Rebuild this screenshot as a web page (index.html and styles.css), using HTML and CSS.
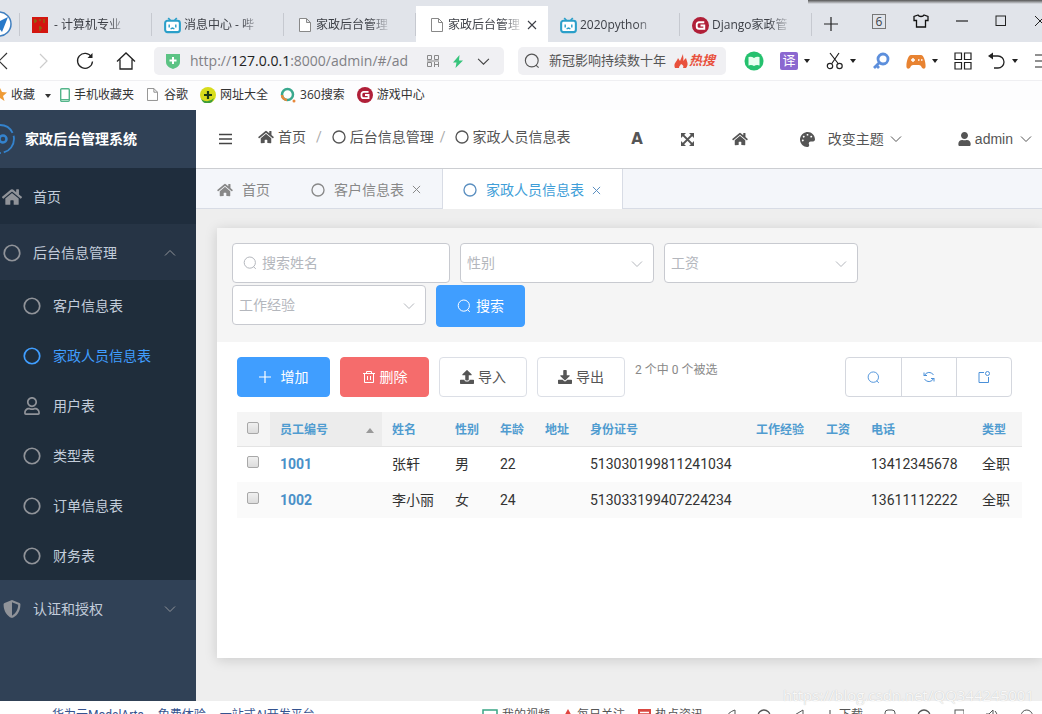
FILE: index.html
```html
<!DOCTYPE html>
<html lang="zh-CN">
<head>
<meta charset="utf-8">
<title>家政后台管理系统</title>
<link rel="stylesheet" href="styles.css">
</head>
<body>
<svg class="sprite" aria-hidden="true">
  <symbol id="i-home" viewBox="0 0 576 512"><path fill="currentColor" d="M280.37 148.26L96 300.11V464a16 16 0 0 0 16 16l112.06-.29a16 16 0 0 0 15.92-16V368a16 16 0 0 1 16-16h64a16 16 0 0 1 16 16v95.64a16 16 0 0 0 16 16.05L464 480a16 16 0 0 0 16-16V300L295.67 148.26a12.19 12.19 0 0 0-15.3 0zM571.6 251.47L488 182.56V44.05a12 12 0 0 0-12-12h-56a12 12 0 0 0-12 12v72.61L318.47 43a48 48 0 0 0-61 0L4.34 251.47a12 12 0 0 0-1.6 16.9l25.5 31A12 12 0 0 0 45.15 301l235.22-193.74a12.19 12.19 0 0 1 15.3 0L530.9 301a12 12 0 0 0 16.9-1.6l25.5-31a12 12 0 0 0-1.7-16.93z"/></symbol>
  <symbol id="i-circle" viewBox="0 0 20 20"><circle cx="10" cy="10" r="8.6" fill="none" stroke="currentColor" stroke-width="1.9"/></symbol>
  <symbol id="i-user" viewBox="0 0 448 512"><path fill="currentColor" d="M224 256c70.7 0 128-57.3 128-128S294.7 0 224 0 96 57.3 96 128s57.3 128 128 128zm89.6 32h-16.7c-22.2 10.2-46.9 16-72.9 16s-50.6-5.8-72.9-16h-16.7C60.2 288 0 348.2 0 422.4V464c0 26.5 21.5 48 48 48h352c26.5 0 48-21.5 48-48v-41.6c0-74.2-60.2-134.4-134.4-134.4z"/></symbol>
  <symbol id="i-user-line" viewBox="0 0 448 512"><path fill="currentColor" d="M313.6 304c-28.7 0-42.5 16-89.6 16-47.1 0-60.8-16-89.6-16C60.2 304 0 364.2 0 438.4V464c0 26.5 21.5 48 48 48h352c26.5 0 48-21.5 48-48v-25.6c0-74.2-60.2-134.4-134.4-134.4zM400 464H48v-25.6c0-47.6 38.8-86.4 86.4-86.4 14.6 0 38.3 16 89.6 16 51.7 0 74.9-16 89.6-16 47.6 0 86.4 38.8 86.4 86.4V464zM224 288c79.5 0 144-64.5 144-144S303.5 0 224 0 80 64.5 80 144s64.5 144 144 144zm0-240c52.9 0 96 43.1 96 96s-43.1 96-96 96-96-43.1-96-96 43.1-96 96-96z"/></symbol>
  <symbol id="i-shield" viewBox="0 0 512 512"><path fill="currentColor" d="M466.5 83.7l-192-80a48.15 48.15 0 0 0-36.9 0l-192 80C27.7 91.1 16 108.6 16 128c0 198.5 114.5 335.7 221.5 380.3 11.8 4.9 25.1 4.9 36.9 0C360.1 472.6 496 349.3 496 128c0-19.4-11.7-36.9-29.5-44.3zM256.1 446.3l-.1-381 175.9 73.3c-3.3 151.4-82.1 261.1-175.8 307.7z"/></symbol>
  <symbol id="i-palette" viewBox="0 0 512 512"><path fill="currentColor" d="M204.3 5C104.9 24.4 24.8 104.3 5.2 203.4c-37 187 131.7 326.4 258.8 306.7 41.2-6.4 61.4-54.6 42.5-91.7-23.1-45.4 9.9-98.4 60.9-98.4h79.7c35.8 0 64.8-29.6 64.9-65.3C511.5 97.1 368.1-26.9 204.3 5zM96 320c-17.7 0-32-14.3-32-32s14.3-32 32-32 32 14.3 32 32-14.3 32-32 32zm32-128c-17.7 0-32-14.3-32-32s14.3-32 32-32 32 14.3 32 32-14.3 32-32 32zm128-64c-17.7 0-32-14.3-32-32s14.3-32 32-32 32 14.3 32 32-14.3 32-32 32zm128 64c-17.7 0-32-14.3-32-32s14.3-32 32-32 32 14.3 32 32-14.3 32-32 32z"/></symbol>
  <symbol id="i-upload" viewBox="0 0 512 512"><path fill="currentColor" d="M296 384h-80c-13.3 0-24-10.7-24-24V192h-87.7c-17.8 0-26.7-21.5-14.1-34.1L242.3 5.7c7.5-7.5 19.8-7.5 27.3 0l152.2 152.2c12.6 12.6 3.7 34.1-14.1 34.1H320v168c0 13.3-10.7 24-24 24zm216-8v112c0 13.3-10.7 24-24 24H24c-13.3 0-24-10.7-24-24V376c0-13.3 10.7-24 24-24h136v8c0 30.9 25.1 56 56 56h80c30.9 0 56-25.1 56-56v-8h136c13.3 0 24 10.7 24 24z"/></symbol>
  <symbol id="i-download" viewBox="0 0 512 512"><path fill="currentColor" d="M216 0h80c13.3 0 24 10.7 24 24v168h87.7c17.8 0 26.7 21.5 14.1 34.1L269.7 378.3c-7.5 7.5-19.8 7.5-27.3 0L90.1 226.1c-12.6-12.6-3.7-34.1 14.1-34.1H192V24c0-13.3 10.7-24 24-24zm296 376v112c0 13.3-10.7 24-24 24H24c-13.3 0-24-10.7-24-24V376c0-13.3 10.7-24 24-24h146.7l49 49c20.1 20.1 52.5 20.1 72.6 0l49-49H488c13.3 0 24 10.7 24 24z"/></symbol>
  <symbol id="i-down" viewBox="0 0 12 12"><path d="M1 3.5l5 5 5-5" fill="none" stroke="currentColor"/></symbol>
  <symbol id="i-up" viewBox="0 0 12 12"><path d="M1 8.5l5-5 5 5" fill="none" stroke="currentColor"/></symbol>
  <symbol id="i-caret" viewBox="0 0 6 4"><path d="M0 0h6L3 4z" fill="currentColor"/></symbol>
  <symbol id="i-x" viewBox="0 0 10 10"><path d="M1 1l8 8M9 1L1 9" fill="none" stroke="currentColor" stroke-width="1.1"/></symbol>
  <symbol id="i-search" viewBox="0 0 14 14"><circle cx="6.8" cy="6.6" r="5.6" fill="none" stroke="currentColor"/><path d="M10.4 10.6l2.4 2.2" fill="none" stroke="currentColor"/></symbol>
  <symbol id="i-page" viewBox="0 0 12 14"><path d="M.5.5h7l4 4v9H.5zM7.5.5v4h4" fill="#fff" stroke="#888"/></symbol>
  <symbol id="i-bili" viewBox="0 0 18 18"><path d="M4.5 1l2.500 3M13.500 1L11 4" stroke="#2b9fc9" stroke-width="1.8" fill="none"/><rect x="1.200" y="4" width="15.600" height="12" rx="2.500" fill="#fff" stroke="#2b9fc9" stroke-width="2.200"/><path d="M5.500 8v3M12.500 8v3M7 12.500l2-.8 2 .8" stroke="#2b9fc9" stroke-width="1.500" fill="none"/></symbol>
  <symbol id="i-g" viewBox="0 0 18 18"><circle cx="9" cy="9" r="9" fill="#b01f38"/><path d="M13 5.500H7.500A2.500 2.500 0 0 0 5 8v2a2.500 2.500 0 0 0 2.500 2.500H13V9H9" fill="none" stroke="#fff" stroke-width="2"/></symbol>
</svg>

<div class="window">
  <div class="window-shade"></div>
  <nav class="tabstrip" aria-label="浏览器标签">
    <div class="tab tab-pinned"><svg width="12" height="26" viewBox="13 0 12 26"><circle cx="12" cy="13" r="12" fill="#fff" stroke="#3f7fc0" stroke-width="1.500"/><path d="M3 15L21 6l-6 15-4-5z" fill="#2879c9"/></svg></div>
    <div class="tab"><svg width="16" height="16" viewBox="0 0 16 16"><rect width="16" height="16" fill="#d3160f"/><path d="M2 4h3M7 3h2M12 2v4M3 2v4M8 9v5M7 11h3" stroke="#8d6512" stroke-width="1.500"/></svg><span class="tab-title">- 计算机专业</span></div>
    <div class="tab"><svg width="17" height="17"><use href="#i-bili"/></svg><span class="tab-title narrow">消息中心 - 哔</span></div>
    <div class="tab"><svg class="page" width="12" height="14"><use href="#i-page"/></svg><span class="tab-title">家政后台管理</span></div>
    <div class="tab active"><svg class="page" width="12" height="14"><use href="#i-page"/></svg><span class="tab-title">家政后台管理</span><button class="tab-close" aria-label="关闭标签"><svg width="10" height="10"><use href="#i-x"/></svg></button></div>
    <div class="tab"><svg width="17" height="17"><use href="#i-bili"/></svg><span class="tab-title narrow">2020python</span></div>
    <div class="tab"><svg width="17" height="17"><use href="#i-g"/></svg><span class="tab-title narrow">Django家政管</span></div>
    <button class="new-tab" aria-label="新标签"><svg width="14" height="14" viewBox="0 0 14 14"><path d="M7 0v14M0 7h14" stroke="#222" stroke-width="1.200"/></svg></button>
    <div class="win-tools">
      <button class="count">6</button>
      <button aria-label="皮肤"><svg width="16" height="14" viewBox="0 0 16 14"><path d="M5 1L1 2.500v4h2.500V13h9V6.500H15v-4L11 1C10 3 6 3 5 1z" fill="none" stroke="#111" stroke-width="1.300"/></svg></button>
      <button aria-label="最小化"><svg width="12" height="12" viewBox="0 0 12 12"><path d="M0 6h12" stroke="#222" stroke-width="1.200"/></svg></button>
      <button aria-label="最大化"><svg width="12" height="12" viewBox="0 0 12 12"><rect x="1" y="1" width="9.500" height="9.500" fill="none" stroke="#222"/></svg></button>
      <button aria-label="关闭"><svg width="8" height="12" viewBox="0 0 8 12"><path d="M1 1l10 10M1 11L11 1" stroke="#222"/></svg></button>
    </div>
  </nav>

  <div class="addressbar">
    <div class="nav-buttons">
      <button class="back" aria-label="后退"><svg width="8" height="18" viewBox="0 0 8 18"><path d="M7 1l-8 8 8 8" fill="none" stroke="#333" stroke-width="1.200"/></svg></button>
      <button aria-label="前进"><svg width="10" height="18" viewBox="0 0 10 18"><path d="M1 2l7 7-7 7" fill="none" stroke="#ccc" stroke-width="1.200"/></svg></button>
      <button aria-label="刷新"><svg width="18" height="18" viewBox="0 0 18 18"><path d="M15.500 5A7.500 7.500 0 1 0 16.500 9.500" fill="none" stroke="#222" stroke-width="1.300"/><path d="M16.500 1v5h-5z" fill="#222"/></svg></button>
      <button aria-label="主页"><svg width="20" height="18" viewBox="0 0 20 18"><path d="M1 9.500L10 1l9 8.500M4 7.500V17h12V7.500" fill="none" stroke="#222" stroke-width="1.300"/></svg></button>
    </div>
    <div class="urlbox">
      <svg width="14" height="16" viewBox="0 0 14 16"><path d="M0 1h14v8c0 4-4 6-7 7-3-1-7-3-7-7z" fill="#5cc384"/><path d="M7 4v7M3.500 7.500h7" stroke="#fff" stroke-width="2"/></svg>
      <div class="url">http://<b>127.0.0.1</b>:8000/admin/#/ad</div>
      <svg width="12" height="12" viewBox="0 0 12 12" fill="none" stroke="#888"><path d="M.5.500h4v4h-4zM7.500.500h4v4h-4zM.5 7.500h4v4h-4zM7.500 7v5M11.500 7v5M7.500 9.500h4M0 6h12"/></svg>
      <svg width="10" height="13" viewBox="0 0 10 13"><path d="M6.500 0L0 7.500h3.500L2.500 13 10 5.500H6z" fill="#37c47c"/></svg>
      <svg width="13" height="13"><use href="#i-down"/></svg>
    </div>
    <div class="searchbox">
      <svg width="16" height="16"><use href="#i-search"/></svg>
      <span>新冠影响持续数十年</span>
      <span class="hot"><svg width="14" height="14" viewBox="0 0 14 14"><path d="M1 14C-1 9 3 8 4 4l2 3 3-7c0 3 1 4 0 7l3-3c1 4 3 6 0 10H9c1-2 0-3-2-4-1 2-2 2-2 4z" fill="#e8503c"/></svg>热搜</span>
    </div>
    <div class="tools">
      <button aria-label="阅读"><svg width="20" height="20" viewBox="0 0 20 20"><circle cx="10" cy="10" r="9.500" fill="#25c16e"/><path d="M4.500 6q3-1 5.500 1 2.500-2 5.500-1v8.500q-3-1-5.500.5-2.500-1.500-5.500-.5z" fill="#e8fff0"/></svg></button>
      <button class="split"><span class="translate">译</span><svg width="6" height="4"><use href="#i-caret"/></svg></button>
      <button class="split" aria-label="截图"><svg width="18" height="18" viewBox="0 0 18 18" fill="none" stroke="#222" stroke-width="1.200"><path d="M4 1l8.500 11M13 1L5.500 12"/><circle cx="4" cy="14" r="2.700"/><circle cx="13.500" cy="14" r="2.700"/></svg><svg width="6" height="4"><use href="#i-caret"/></svg></button>
      <button aria-label="密码"><svg width="18" height="18" viewBox="0 0 18 18"><circle cx="11" cy="7" r="5" fill="none" stroke="#5d8fdc" stroke-width="2.800"/><path d="M7.500 10.500L2 16M4 13l3 3" stroke="#5d8fdc" stroke-width="2.800"/></svg></button>
      <button class="split" aria-label="游戏"><svg width="20" height="15" viewBox="0 0 20 15"><path d="M5 1h10c3 0 5 8 4.500 12-.5 2.500-3 2-4 0-1-2-2-2-5.500-2s-4.500 0-5.500 2-3.500 2.500-4 0C0 9 2 1 5 1z" fill="#e88331"/><path d="M7 4v4M5 6h4M12 6h1.500M15 6h1.500" stroke="#fff" stroke-width="1.400"/></svg><svg width="6" height="4"><use href="#i-caret"/></svg></button>
      <button aria-label="应用"><svg width="18" height="18" viewBox="0 0 18 18" fill="none" stroke="#222" stroke-width="1.200"><path d="M1 1h6.500v6.500H1zM10.500 1H17v6.500h-6.500zM1 10.500h6.500V17H1zM10.500 10.500H17V17h-6.500z"/></svg></button>
      <button class="split" aria-label="恢复"><svg width="18" height="18" viewBox="0 0 18 18"><path d="M3 4h7a6 6 0 0 1 0 12H6" fill="none" stroke="#222" stroke-width="1.300"/><path d="M0 4l5-3.500v7z" fill="#222"/></svg><svg width="6" height="4"><use href="#i-caret"/></svg></button>
      <button aria-label="菜单"><svg width="8" height="14" viewBox="0 0 8 14"><path d="M1 1h7M1 7h7M1 13h7" stroke="#222" stroke-width="1.200"/></svg></button>
    </div>
  </div>

  <nav class="bookmarks" aria-label="收藏栏">
    <a href="#fav"><svg width="7" height="13" viewBox="5 0 7 13"><path d="M5 0l2 4 5 .5-4 3.500 1.500 5L5 10z" fill="#ee9a35"/></svg>收藏<svg class="bm-caret" width="6" height="4"><use href="#i-caret"/></svg></a>
    <a href="#phone"><svg width="10" height="14" viewBox="0 0 10 14"><rect x=".7" y=".7" width="8.600" height="12.600" rx="1" fill="#fff" stroke="#54b58a" stroke-width="1.400"/><path d="M1 11.500h8" stroke="#54b58a"/></svg>手机收藏夹</a>
    <a href="#google"><svg class="page-mark" width="11" height="13"><use href="#i-page"/></svg>谷歌</a>
    <a href="#sites"><svg width="16" height="16" viewBox="0 0 16 16"><circle cx="8" cy="8" r="8" fill="#d8dc1c"/><path d="M1 12q7 5 13-1l-2 4q-5 3-9 0z" fill="#3d9c3a"/><path d="M8 4v8M4 8h8" stroke="#1d3a17" stroke-width="2.200"/></svg>网址大全</a>
    <a href="#so"><svg width="16" height="16" viewBox="0 0 16 16"><circle cx="7.500" cy="7.500" r="5.500" fill="none" stroke="#39a88e" stroke-width="2.500"/><path d="M2 8a5.500 5.500 0 0 0 5 5" fill="none" stroke="#e8883c" stroke-width="2.500"/><circle cx="14" cy="14" r="1.500" fill="#e8883c"/></svg>360搜索</a>
    <a href="#games"><svg width="16" height="16"><use href="#i-g"/></svg>游戏中心</a>
  </nav>

  <div class="app">
    <aside class="sidebar">
      <div class="brand"><svg width="16" height="32" viewBox="16 0 16 32" fill="none" stroke="#3483cd"><circle cx="16" cy="16" r="14" stroke-width="1.800" stroke-dasharray="18 3"/><circle cx="19" cy="16" r="3.500" stroke-width="2.500"/></svg><strong>家政后台管理系统</strong></div>
      <a class="menu-item home" href="#home"><svg width="20" height="18"><use href="#i-home"/></svg>首页</a>
      <button class="menu-item open"><svg width="18" height="18"><use href="#i-circle"/></svg>后台信息管理<svg class="arrow" width="12" height="12"><use href="#i-up"/></svg></button>
      <div class="submenu">
        <a href="#customer"><svg width="18" height="18"><use href="#i-circle"/></svg>客户信息表</a>
        <a class="current" href="#staff"><svg width="18" height="18"><use href="#i-circle"/></svg>家政人员信息表</a>
        <a href="#users"><svg width="18" height="18"><use href="#i-user-line"/></svg>用户表</a>
        <a href="#types"><svg width="18" height="18"><use href="#i-circle"/></svg>类型表</a>
        <a href="#orders"><svg width="18" height="18"><use href="#i-circle"/></svg>订单信息表</a>
        <a href="#finance"><svg width="18" height="18"><use href="#i-circle"/></svg>财务表</a>
      </div>
      <button class="menu-item"><svg width="18" height="18"><use href="#i-shield"/></svg>认证和授权<svg class="arrow" width="12" height="12"><use href="#i-down"/></svg></button>
    </aside>

    <section class="content">
      <header class="topbar">
        <button class="burger" aria-label="折叠菜单"><svg width="13" height="12" viewBox="0 0 13 12"><path d="M0 1.500h13M0 6h13M0 10.500h13" stroke="#444" stroke-width="1.700"/></svg></button>
        <nav class="crumbs" aria-label="面包屑">
          <a href="#home"><svg width="16" height="14"><use href="#i-home"/></svg>首页</a><span class="slash">/</span>
          <a href="#admin"><svg width="14" height="14"><use href="#i-circle"/></svg>后台信息管理</a><span class="slash tight">/</span>
          <a href="#staff"><svg width="14" height="14"><use href="#i-circle"/></svg>家政人员信息表</a>
        </nav>
        <div class="top-actions">
          <button class="font-size">A</button>
          <button aria-label="全屏"><svg width="13" height="13" viewBox="0 0 13 13"><path d="M2 2l9 9M11 2l-9 9" stroke="#555" stroke-width="1.800"/><path d="M0 0h5L0 5zM13 0v5L8 0zM0 13V8l5 5zM13 13H8l5-5z" fill="#555"/></svg></button>
          <button class="to-home" aria-label="首页"><svg width="16" height="14"><use href="#i-home"/></svg></button>
          <button class="theme"><svg width="15" height="15"><use href="#i-palette"/></svg><span>改变主题</span><svg width="12" height="12"><use href="#i-down"/></svg></button>
          <button class="account"><svg width="13" height="14"><use href="#i-user"/></svg><span>admin</span><svg width="12" height="12"><use href="#i-down"/></svg></button>
        </div>
      </header>

      <nav class="page-tabs" aria-label="页面标签">
        <a href="#home"><svg width="16" height="14"><use href="#i-home"/></svg>首页</a>
        <a href="#customer"><svg width="14" height="14"><use href="#i-circle"/></svg>客户信息表<svg class="close" width="9" height="9"><use href="#i-x"/></svg></a>
        <a class="active" href="#staff"><svg width="14" height="14"><use href="#i-circle"/></svg>家政人员信息表<svg class="close" width="9" height="9"><use href="#i-x"/></svg></a>
      </nav>

      <main class="main">
        <div class="card">
          <form class="filters">
            <label class="field search"><svg width="14" height="14"><use href="#i-search"/></svg><input type="text" placeholder="搜索姓名" aria-label="搜索姓名"></label>
            <label class="field"><select aria-label="性别"><option>性别</option></select><svg width="12" height="12"><use href="#i-down"/></svg></label>
            <label class="field"><select aria-label="工资"><option>工资</option></select><svg width="12" height="12"><use href="#i-down"/></svg></label>
            <label class="field"><select aria-label="工作经验"><option>工作经验</option></select><svg width="12" height="12"><use href="#i-down"/></svg></label>
            <button class="btn primary submit" type="button"><svg width="14" height="14"><use href="#i-search"/></svg>搜索</button>
          </form>
          <div class="list">
            <div class="toolbar">
              <button class="btn primary add"><svg width="12" height="12" viewBox="0 0 12 12"><path d="M6 0v12M0 6h12" stroke="#fff" stroke-width="1.200"/></svg>增加</button>
              <button class="btn danger"><svg width="14" height="14" viewBox="0 0 14 14" fill="none" stroke="#fff"><path d="M1 3.500h12M4.500 3V1.500h5V3M2.500 3.500v9h9v-9M5.500 6v4M8.500 6v4"/></svg>删除</button>
              <button class="btn"><svg width="14" height="14"><use href="#i-upload"/></svg>导入</button>
              <button class="btn"><svg width="14" height="14"><use href="#i-download"/></svg>导出</button>
              <span class="selected">2 个中 0 个被选</span>
              <div class="btn-group">
                <button aria-label="搜索"><svg width="13" height="13"><use href="#i-search"/></svg></button>
                <button aria-label="刷新"><svg width="12" height="12" viewBox="0 0 12 12" fill="none" stroke="currentColor"><path d="M1 5V1.500M1 4.500h3M1.500 4.500a5 5 0 0 1 9-.5M11 7v3.500M11 7.500H8M10.500 7.500a5 5 0 0 1-9 .5"/></svg></button>
                <button aria-label="新窗口"><svg width="12" height="12" viewBox="0 0 12 12" fill="none" stroke="currentColor"><path d="M6 1.500H1v10h9.500V6"/><circle cx="9.500" cy="2.500" r="2"/></svg></button>
              </div>
            </div>
            <table>
              <colgroup><col class="c-check"><col class="c-id"><col class="c-name"><col class="c-short"><col class="c-short"><col class="c-short"><col><col class="c-exp"><col class="c-short"><col class="c-phone"><col class="c-type"></colgroup>
              <thead><tr><th><input type="checkbox" aria-label="全选"></th><th class="sorted">员工编号<svg width="8" height="5" viewBox="0 0 8 5"><path d="M0 5h8L4 0z" fill="#999"/></svg></th><th>姓名</th><th>性别</th><th>年龄</th><th>地址</th><th>身份证号</th><th>工作经验</th><th>工资</th><th>电话</th><th>类型</th></tr></thead>
              <tbody>
                <tr><td><input type="checkbox" aria-label="选择 1001"></td><td><a href="#1001">1001</a></td><td>张轩</td><td>男</td><td>22</td><td></td><td>513030199811241034</td><td></td><td></td><td>13412345678</td><td>全职</td></tr>
                <tr><td><input type="checkbox" aria-label="选择 1002"></td><td><a href="#1002">1002</a></td><td>李小丽</td><td>女</td><td>24</td><td></td><td>513033199407224234</td><td></td><td></td><td>13611112222</td><td>全职</td></tr>
              </tbody>
            </table>
          </div>
        </div>
        <div class="watermark">https://blog.csdn.net/QQ344245001</div>
      </main>
    </section>
  </div>

  <footer class="statusbar">
    <div class="ads"><a href="#cloud">华为云ModelArts</a><a href="#trial">免费体验</a><a href="#platform">一站式AI开发平台</a></div>
    <div class="status-tools">
      <span><svg width="16" height="14" viewBox="0 0 16 14"><rect x="1" y="1" width="14" height="12" fill="none" stroke="#3aa585" stroke-width="1.500"/><path d="M7 5l4 3-4 3z" fill="#3aa585"/></svg>我的视频</span>
      <span><svg width="10" height="14" viewBox="0 0 10 14"><path d="M5 0l5 9-5 5-5-5z" fill="#e0453f"/></svg>每日关注</span>
      <span><svg width="13" height="12" viewBox="0 0 13 12"><rect width="13" height="12" fill="#d94841"/><path d="M2 3.500h9" stroke="#fff" stroke-width="1.500"/></svg>热点资讯</span>
      <svg width="12" height="14" viewBox="0 0 12 14"><path d="M11 1Q4 3 1 10l10 2z" fill="none" stroke="#555"/></svg>
      <svg width="14" height="14"><use href="#i-circle"/></svg>
      <svg width="12" height="14" viewBox="0 0 12 14"><path d="M11 1L1 7l10 5z" fill="none" stroke="#555"/></svg>
      <span><svg width="10" height="14" viewBox="0 0 10 14"><path d="M5 1v10M1 8l4 4 4-4" fill="none" stroke="#444"/></svg>下载</span>
      <svg width="12" height="14" viewBox="0 0 12 14"><rect x="1" y="1" width="10" height="12" rx="3" fill="none" stroke="#555"/></svg>
      <svg width="14" height="14"><use href="#i-circle"/></svg>
      <svg width="12" height="14" viewBox="0 0 12 14"><rect x="3" y="1" width="9" height="12" fill="none" stroke="#555"/></svg>
      <svg width="14" height="14" viewBox="0 0 14 14"><path d="M1 5h3l4-4v12L4 9H1zM10 2q4 4 0 10" fill="none" stroke="#555"/></svg>
      <svg width="14" height="14"><use href="#i-search"/></svg>
    </div>
  </footer>
</div>
</body>
</html>
```

FILE: styles.css
```css
* { box-sizing: border-box; }
body {
  margin: 0;
  font: 14px/20px Roboto, "Noto Sans CJK SC", sans-serif;
  color: #333;
}
svg { flex: none; display: block; }
.sprite { position: absolute; width: 0; height: 0; }
a { color: inherit; text-decoration: none; }
button {
  display: flex;
  align-items: center;
  margin: 0;
  padding: 0;
  border: 0;
  background: none;
  color: inherit;
  font: inherit;
}
.window {
  position: relative;
  display: flex;
  flex-direction: column;
  height: 100vh;
  overflow: hidden;
  background: #fdfdfe;
}
.window-shade {
  position: absolute;
  top: 0;
  right: 0;
  width: 234px;
  height: 4px;
  background: linear-gradient(#555, #e1e4ea);
}

/* browser tabs */
.tabstrip {
  display: flex;
  flex: none;
  height: 42px;
  padding-top: 6px;
  background: #e1e4ea;
  font: 12px/20px "Open Sans", "Noto Sans CJK SC", sans-serif;
  color: #3c3f46;
}
.tab {
  position: relative;
  display: flex;
  align-items: center;
  gap: 6px;
  flex: 0 1 132px;
  padding: 2px 0 0 12px;
}
.tab::after {
  content: "";
  position: absolute;
  right: 0;
  top: 7px;
  height: 23px;
  border-right: 1px solid #c6c9d0;
}
.tab-pinned { flex: none; width: 20px; padding: 0; }
.tab .page { margin-left: 3px; }
.tab.active { background: #fff; }
.tab.active::after { display: none; }
.tab-title {
  width: 76px;
  white-space: nowrap;
  mask-image: linear-gradient(90deg, #000 70%, transparent);
}
.page + .tab-title { margin-left: -1px; }
.tab-title.narrow { width: 80px; margin-left: -3px; }
.tab-close { margin-left: -3px; }
.new-tab { margin-left: 12px; height: 36px; }
.win-tools {
  display: flex;
  align-items: center;
  gap: 27px;
  height: 30px;
  margin-left: auto;
}
.win-tools .count {
  justify-content: center;
  width: 14px;
  height: 15px;
  border: 1px solid #777;
  line-height: 13px;
}

/* address row */
.addressbar {
  display: flex;
  align-items: center;
  flex: none;
  height: 39px;
  border-bottom: 1px solid #efeff2;
  background: #fff;
}
.nav-buttons { display: flex; padding-right: 8px; }
.nav-buttons button { justify-content: center; width: 41px; }
.nav-buttons .back { width: 23px; justify-content: flex-start; }
.urlbox, .searchbox {
  display: flex;
  align-items: center;
  height: 28px;
  border-radius: 5px;
  background: #f0f0f3;
}
.urlbox { flex: 1; min-width: 0; gap: 14px; padding: 0 14px 0 12px; color: #444; }
.url {
  flex: 1;
  min-width: 0;
  margin: 0 0 0 -4px;
  white-space: nowrap;
  font: 14px/22px "Open Sans", sans-serif;
  color: #808085;
}
.url b { font-weight: 400; color: #222; }
.searchbox {
  flex: none;
  width: 208px;
  margin-left: 14px;
  padding-left: 6px;
  font-size: 13px;
  color: #555;
  white-space: nowrap;
}
.searchbox > span { margin-left: 9px; }
.searchbox .hot {
  display: flex;
  align-items: center;
  gap: 1px;
  margin-left: 8px;
  color: #e8503c;
  font-weight: 700;
  font-style: italic;
}
.tools { display: flex; align-items: center; gap: 16px; padding-left: 18px; }
.tools .split { gap: 6px; color: #222; }
.translate {
  width: 18px;
  height: 18px;
  border-radius: 2px;
  background: #8b68d0;
  color: #fff;
  font-size: 13px;
  line-height: 17px;
}

/* bookmarks */
.bookmarks {
  display: flex;
  align-items: center;
  flex: none;
  gap: 12px;
  height: 29px;
  padding-bottom: 2px;
  font: 12px/18px "Open Sans", "Noto Sans CJK SC", sans-serif;
  color: #333;
}
.bookmarks a { display: flex; align-items: center; gap: 4px; }
.bookmarks .bm-caret { margin: 2px -3px 0 6px; }
.bookmarks .page-mark { margin: 0 2px 0 1px; }

/* admin shell */
.app { display: flex; flex: 1; min-height: 0; }
.sidebar {
  display: flex;
  flex-direction: column;
  flex: none;
  width: 196px;
  background: #304156;
  color: #c3cddb;
}
.brand {
  display: flex;
  align-items: center;
  gap: 9px;
  height: 58px;
  color: #fff;
}
.menu-item {
  display: flex;
  align-items: center;
  gap: 12px;
  width: 100%;
  height: 56px;
  padding: 2px 0 0 3px;
}
.menu-item > svg, .submenu svg { color: #909399; }
.menu-item .arrow { margin: 0 20px 0 auto; }
.home { gap: 11px; padding-left: 2px; background: #1f2d3d; }
.open { background: #263445; }
.submenu { background: #1f2d3b; }
.submenu a {
  display: flex;
  align-items: center;
  gap: 12px;
  height: 50px;
  padding: 2px 0 0 23px;
}
.submenu .current, .submenu .current svg { color: #409eff; }

.content { display: flex; flex: 1; flex-direction: column; min-width: 0; }
.topbar {
  display: flex;
  align-items: center;
  flex: none;
  height: 59px;
  padding: 0 10px 0 23px;
  border-bottom: 1px solid #ccced2;
  background: #fff;
  color: #555;
  white-space: nowrap;
}
.crumbs { display: flex; margin: -4px 0 0 26px; }
.crumbs a { display: flex; align-items: center; gap: 4px; }
.slash { margin: 0 10px; color: #aaa; }
.slash.tight { margin: 0 9px 0 6px; }
.top-actions { display: flex; align-items: center; gap: 38px; margin-left: auto; }
.font-size { font: 700 15px/20px "DejaVu Sans", sans-serif; }
.theme { gap: 6px; margin-left: 14px; }
.theme span { margin-left: 7px; }
.account { gap: 4px; margin-left: 18px; }
.account span { margin-right: 3px; font-family: "Liberation Sans", sans-serif; }
.page-tabs {
  display: flex;
  flex: none;
  height: 40px;
  border-bottom: 1px solid #d8dce5;
  background: #f4f6fa;
  color: #888;
}
.page-tabs a {
  display: flex;
  align-items: center;
  gap: 9px;
  padding: 2px 20px 0 21px;
}
.page-tabs .close { margin: 0 1px 0 -1px; }
.page-tabs .active {
  margin-bottom: -1px;
  padding-left: 20px;
  border: solid #d8dce5;
  border-width: 0 1px;
  background: #fff;
  color: #409ed8;
}
.page-tabs .active svg { color: #5b8fc0; }

.main {
  position: relative;
  display: flex;
  flex: 1;
  flex-direction: column;
  padding: 19px 0 43px 21px;
  background: #eee;
}
.card { flex: 1; background: #fff; box-shadow: 0 2px 12px rgba(0, 0, 0, .15); }
.filters {
  display: flex;
  flex-wrap: wrap;
  gap: 2px 10px;
  padding: 15px;
  background: #f5f5f5;
}
.field {
  position: relative;
  width: 194px;
  height: 40px;
  color: #b4b7bd;
}
.field.search { width: 218px; }
.field svg { position: absolute; right: 11px; top: 15px; }
.field.search svg { left: 11px; top: 13px; }
.field input, .field select {
  width: 100%;
  height: 100%;
  padding: 0 6px;
  border: 1px solid #c8cad0;
  border-radius: 4px;
  background: #fff;
  color: #b4b7bd;
  font: inherit;
  appearance: none;
}
.field input { padding-left: 29px; }
.field input::placeholder { color: #b4b7bd; }
.btn {
  justify-content: center;
  gap: 4px;
  width: 88px;
  height: 40px;
  border: 1px solid #dcdfe6;
  border-radius: 4px;
  color: #555;
}
.btn.primary { border-color: #409eff; background: #409eff; color: #fff; }
.btn.danger { width: 89px; border-color: #f56c6c; background: #f56c6c; color: #fff; }
.btn.submit { width: 89px; height: 42px; gap: 5px; }
.btn.add { width: 93px; gap: 10px; }
.list { padding: 15px 20px; }
.toolbar { display: flex; gap: 10px; margin-bottom: 15px; }
.selected { padding-top: 3px; font-size: 12px; color: #888; }
.btn-group {
  display: flex;
  height: 40px;
  margin: 0 10px 0 auto;
  border: 1px solid #d4d7de;
  border-radius: 4px;
  color: #4a90d9;
}
.btn-group button { justify-content: center; width: 55px; }
.btn-group button + button { border-left: 1px solid #d4d7de; }

table { width: 100%; table-layout: fixed; border-collapse: collapse; }
th, td { height: 36px; padding: 0 0 0 10px; text-align: left; white-space: nowrap; }
th {
  height: 34px;
  padding-top: 2px;
  border-bottom: 1px solid #e4e4e4;
  background: #f5f5f5;
  color: #509cd0;
  font-size: 12px;
}
.sorted { background: #ececec; }
.sorted svg { float: right; margin: 8px 8px 0 0; }
td a { color: #4a90c8; font-weight: 700; }
tbody tr:nth-child(2) { background: #fafafa; }
table input {
  display: block;
  width: 12px;
  height: 12px;
  margin: 0 0 4px;
  border: 1px solid #a8a8a8;
  border-radius: 2px;
  background: linear-gradient(#f0f0f0, #dcdcdc);
  appearance: none;
}
.c-check { width: 33px; }
.c-id { width: 112px; }
.c-name { width: 63px; }
.c-short { width: 45px; }
.c-exp { width: 70px; }
.c-phone { width: 111px; }
.c-type { width: 50px; }
.watermark {
  position: absolute;
  right: 8px;
  bottom: -5px;
  font: 15px/22px "Open Sans", sans-serif;
  color: #f8f8f8;
  text-shadow: 0 0 1px #bbb;
}

.statusbar {
  display: flex;
  flex: none;
  justify-content: space-between;
  height: 13px;
  padding: 5px 8px 0 52px;
  overflow: hidden;
  background: #fff;
  font-size: 12px;
  line-height: 18px;
  color: #333;
  white-space: nowrap;
}
.ads { display: flex; gap: 14px; color: #35538f; }
.status-tools { display: flex; gap: 21px; color: #555; }
.status-tools > svg { margin-top: 3px; }
.status-tools span { display: flex; gap: 4px; }
.status-tools span + span { margin-left: -8px; }
.status-tools span svg { margin-top: 3px; }
```
